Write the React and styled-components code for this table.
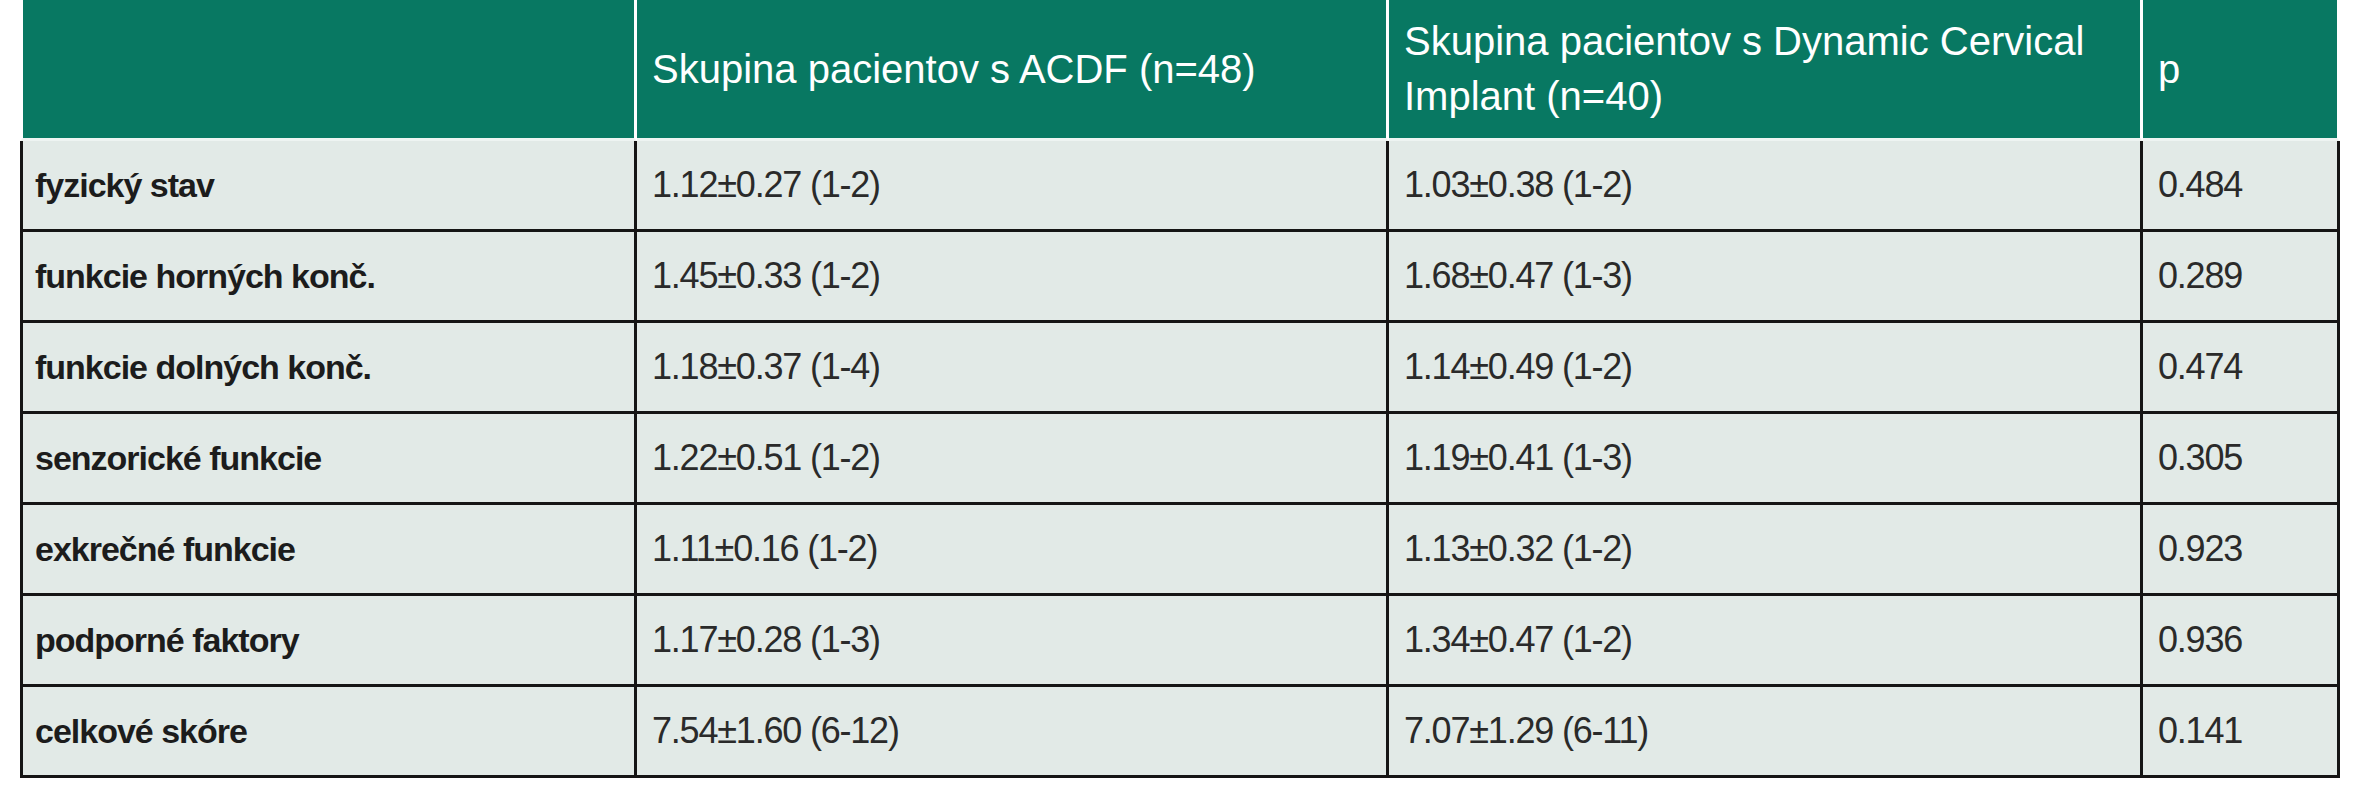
import styled, { createGlobalStyle } from "styled-components";

// ─── global ──────────────────────────────────────────────────────────────────
const Global = createGlobalStyle`
  html, body {
    margin: 0;
    padding: 0;
    background: #ffffff;
  }
`;

// ─── layout ──────────────────────────────────────────────────────────────────
const Page = styled.div`
  width: 2370px;
  height: 800px;
  padding: 0 0 0 20px;
  box-sizing: border-box;
  background: #ffffff;
`;

const Table = styled.table`
  border-collapse: separate;
  border-spacing: 0;
  table-layout: fixed;
  width: 2320px;
`;

// ── header ──
const HeadCell = styled.th`
  box-sizing: border-box;
  width: ${({ $w }) => $w}px;
  height: 141px;
  padding: 0 15px;
  background: #087862;
  color: #ffffff;
  font-family: "Liberation Sans", Arial, sans-serif;
  font-size: 40px;
  font-weight: 400;
  line-height: 55px;
  text-align: left;
  vertical-align: middle;
  border-right: 3px solid #ffffff;
  border-bottom: 3px solid #eef4f2;
  &:first-child { border-left: 3px solid #ffffff; }
`;

// ── body ──
const Cell = styled.td`
  box-sizing: border-box;
  height: 91px;
  padding: 0 15px;
  background: #e2eae7;
  vertical-align: middle;
  white-space: nowrap;
  font-family: "Liberation Sans", Arial, sans-serif;
  border-right: 3px solid #151515;
  border-bottom: 3px solid #151515;
  &:first-child { border-left: 3px solid #151515; padding-left: 12px; }
`;

const Label = styled(Cell)`
  font-size: 34px;
  font-weight: 700;
  letter-spacing: -1px;
  color: #1c1c1c;
`;

const Value = styled(Cell)`
  font-size: 36px;
  font-weight: 400;
  letter-spacing: -1.2px;
  color: #2a2a2a;
`;

// ─── data ────────────────────────────────────────────────────────────────────
const COLS = [
  { w: 617, title: "" },
  { w: 752, title: "Skupina pacientov s ACDF (n=48)" },
  { w: 754, title: "Skupina pacientov s Dynamic Cervical Implant (n=40)" },
  { w: 197, title: "p" },
];

const ROWS = [
  ["fyzický stav", "1.12±0.27 (1-2)", "1.03±0.38 (1-2)", "0.484"],
  ["funkcie horných konč.", "1.45±0.33 (1-2)", "1.68±0.47 (1-3)", "0.289"],
  ["funkcie dolných konč.", "1.18±0.37 (1-4)", "1.14±0.49 (1-2)", "0.474"],
  ["senzorické funkcie", "1.22±0.51 (1-2)", "1.19±0.41 (1-3)", "0.305"],
  ["exkrečné funkcie", "1.11±0.16 (1-2)", "1.13±0.32 (1-2)", "0.923"],
  ["podporné faktory", "1.17±0.28 (1-3)", "1.34±0.47 (1-2)", "0.936"],
  ["celkové skóre", "7.54±1.60 (6-12)", "7.07±1.29 (6-11)", "0.141"],
];

export default function App() {
  return (
    <Page>
      <Global />
      <Table>
        <thead>
          <tr>
            {COLS.map((c, i) => (
              <HeadCell key={i} $w={c.w}>{c.title}</HeadCell>
            ))}
          </tr>
        </thead>
        <tbody>
          {ROWS.map(([label, a, b, p]) => (
            <tr key={label}>
              <Label>{label}</Label>
              <Value>{a}</Value>
              <Value>{b}</Value>
              <Value>{p}</Value>
            </tr>
          ))}
        </tbody>
      </Table>
    </Page>
  );
}
